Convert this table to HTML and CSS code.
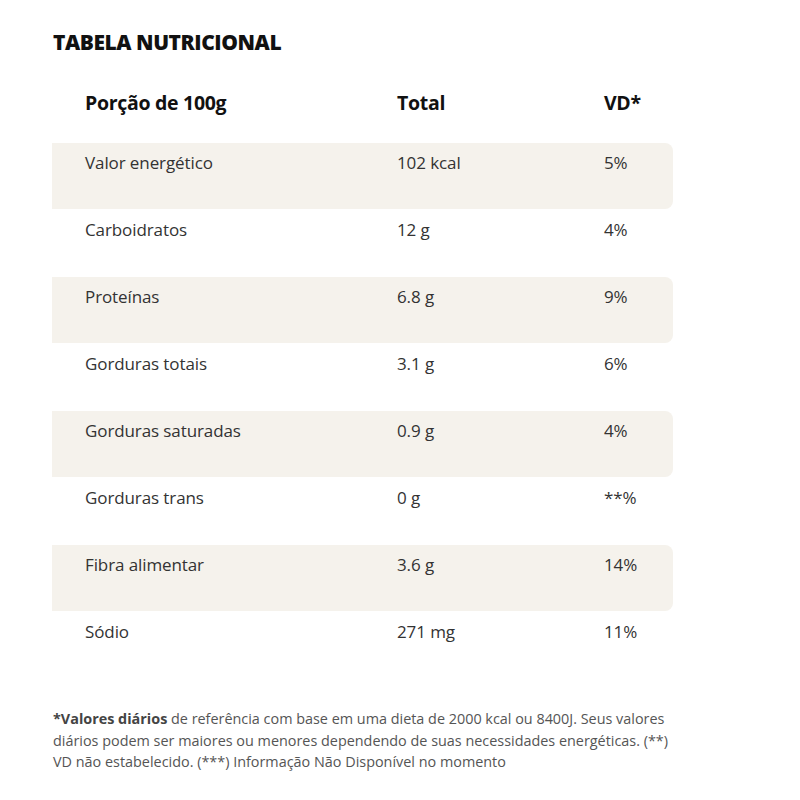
FILE: index.html
```html
<!DOCTYPE html>
<html lang="pt-BR">
<head>
<meta charset="utf-8">
<title>Tabela Nutricional</title>
<link rel="stylesheet" href="styles.css">
</head>
<body>
<main class="page">
  <h1 class="title">TABELA NUTRICIONAL</h1>
  <div class="table">
    <div class="row head">
      <span>Porção de 100g</span><span>Total</span><span>VD*</span>
    </div>
    <div class="row shaded"><span>Valor energético</span><span>102 kcal</span><span>5%</span></div>
    <div class="row"><span>Carboidratos</span><span>12 g</span><span>4%</span></div>
    <div class="row shaded"><span>Proteínas</span><span>6.8 g</span><span>9%</span></div>
    <div class="row"><span>Gorduras totais</span><span>3.1 g</span><span>6%</span></div>
    <div class="row shaded"><span>Gorduras saturadas</span><span>0.9 g</span><span>4%</span></div>
    <div class="row"><span>Gorduras trans</span><span>0 g</span><span>**%</span></div>
    <div class="row shaded"><span>Fibra alimentar</span><span>3.6 g</span><span>14%</span></div>
    <div class="row"><span>Sódio</span><span>271 mg</span><span>11%</span></div>
  </div>
  <p class="note"><strong>*Valores diários</strong> de referência com base em uma dieta de 2000 kcal ou 8400J. Seus valores<br>diários podem ser maiores ou menores dependendo de suas necessidades energéticas. (**)<br>VD não estabelecido. (***) Informação Não Disponível no momento</p>
</main>
</body>
</html>
```

FILE: styles.css
```css
html, body {
  margin: 0;
  padding: 0;
  background: #ffffff;
}

body {
  font-family: "Open Sans", "Noto Sans", "Liberation Sans", sans-serif;
  color: #333333;
}

.page {
  padding: 30px 0 0 52px;
  width: 640px;
}

.title {
  margin: 0 0 0 1px;
  font-size: 21px;
  line-height: 24px;
  font-weight: 800;
  letter-spacing: -0.45px;
  color: #111111;
}

.table {
  margin-top: 33px;
  width: 621px;
  display: flex;
  flex-direction: column;
  gap: 1px;
}

.row {
  display: grid;
  grid-template-columns: 312px 207px 1fr;
  height: 66px;
  padding: 8px 0 0 33px;
  box-sizing: border-box;
  font-size: 17px;
  line-height: 24px;
  letter-spacing: -0.1px;
  color: #333333;
}

.row.head {
  height: 55px;
  padding-top: 4px;
  font-size: 19.5px;
  font-weight: 700;
  color: #111111;
  letter-spacing: -0.3px;
}

.row.shaded {
  background: #f5f2ec;
  border-radius: 0 8px 8px 0;
}

.note {
  margin: 30px 0 0 1px;
  font-size: 14.4px;
  line-height: 21.5px;
  color: #555555;
  letter-spacing: 0;
}

.note strong {
  font-weight: 700;
  color: #444444;
}
```
